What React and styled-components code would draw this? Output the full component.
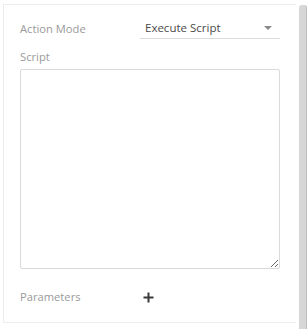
import { styled, createGlobalStyle } from "styled-components";

const Global = createGlobalStyle`
  html, body { margin: 0; padding: 0; background: #fff; }
  body { font-family: "Open Sans", "Liberation Sans", sans-serif; }
`;

function App() {
  return (
    <>
      <Global />
      <Page>
        <Panel>
          <Row>
            <Label>Action Mode</Label>
            <Select>
              <span>Execute Script</span>
              <Caret />
            </Select>
          </Row>
          <Label $top={10}>Script</Label>
          <Area />
          <ParamRow>
            <Label>Parameters</Label>
            <AddButton>
              <svg width="11" height="11" viewBox="0 0 11 11">
                <path d="M5.5 0.5v10M0.5 5.5h10" stroke="#3a3a3a" strokeWidth="2" />
              </svg>
            </AddButton>
          </ParamRow>
        </Panel>
        <Scroll />
      </Page>
    </>
  );
}

const Page = styled.div`
  display: flex;
  width: 307px;
  height: 329px;
  padding: 4px 0 0 3px;
  box-sizing: border-box;
`;

const Panel = styled.div`
  width: 293px;
  height: 319px;
  box-sizing: border-box;
  border-top: 1px solid #ececec;
  border-left: 1px solid #ececec;
  border-bottom: 1px solid #ececec;
  padding: 14px 16px 0 16px;
  display: flex;
  flex-direction: column;
`;

const Row = styled.div`
  display: flex;
  align-items: center;
  height: 20px;
`;

const Label = styled.div`
  font-size: 11.2px;
  color: #9a9a9a;
  width: 120px;
  line-height: 16px;
  margin-top: ${(p) => p.$top || 0}px;
`;

const Select = styled.div`
  display: flex;
  align-items: center;
  justify-content: space-between;
  width: 140px;
  height: 20px;
  border-bottom: 1px solid #dcdcdc;
  padding: 0 8px 2px 5px;
  box-sizing: border-box;
  font-size: 11.5px;
  color: #4a4a4a;
`;

const Caret = styled.div`
  width: 0;
  height: 0;
  border-left: 4px solid transparent;
  border-right: 4px solid transparent;
  border-top: 4px solid #8a8a8a;
`;

const Area = styled.textarea`
  margin-top: 4px;
  width: 260px;
  height: 200px;
  box-sizing: border-box;
  border: 1px solid #dadada;
  border-radius: 2px;
  resize: both;
  outline: none;
`;

const ParamRow = styled.div`
  display: flex;
  align-items: center;
  margin-top: 20px;
`;

const AddButton = styled.div`
  display: flex;
  margin-left: 3px;
`;

const Scroll = styled.div`
  width: 7px;
  height: 325px;
  margin-left: 3px;
  margin-top: 1px;
  background: #d7d7d7;
  border-radius: 3px 3px 0 0;
  border-right: 1px solid #bdbdbd;
`;

export default App;
